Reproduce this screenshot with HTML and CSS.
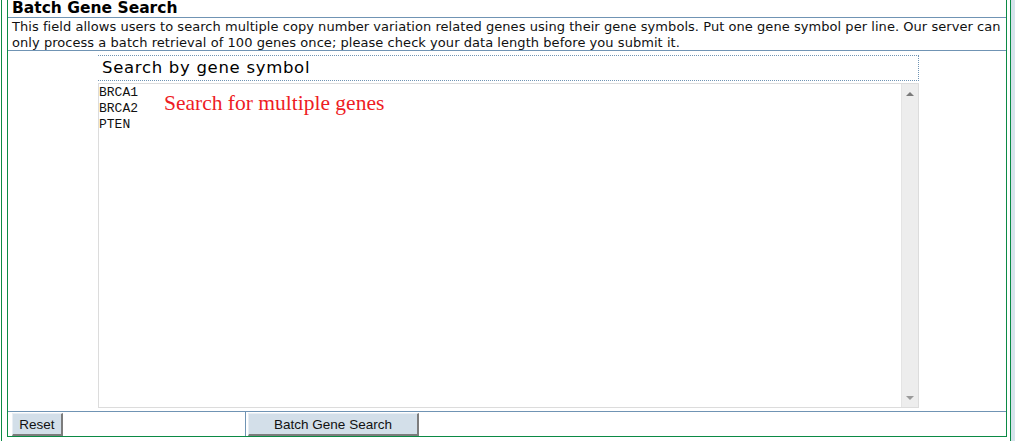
FILE: index.html
```html
<!DOCTYPE html>
<html lang="en">
<head>
  <meta charset="UTF-8">
  <title>Batch Gene Search</title>
  <link rel="stylesheet" href="styles.css">
</head>
<body>
<div class="outer">
  <div class="page">
    <div class="panel">
      <!-- 标题 -->
      <div class="row title">Batch Gene Search</div>
      <!-- 说明 -->
      <div class="row desc">This field allows users to search multiple copy number variation related genes using their gene symbols. Put one gene symbol per line. Our server can only process a batch retrieval of 100 genes once; please check your data length before you submit it.</div>
      <!-- 输入区域 -->
      <div class="row form">
        <div class="legend">Search by gene symbol</div>
        <div class="input-box">
          <textarea class="genes" spellcheck="false">BRCA1
BRCA2
PTEN</textarea>
          <span class="hint">Search for multiple genes</span>
          <div class="scrollbar">
            <span class="arr up"></span>
            <span class="arr down"></span>
          </div>
        </div>
      </div>
      <!-- 按钮 -->
      <div class="row buttons">
        <div class="cell left"><button type="reset" class="btn reset">Reset</button></div>
        <div class="cell right"><button type="submit" class="btn submit">Batch Gene Search</button></div>
      </div>
    </div>
  </div>
</div>
</body>
</html>
```

FILE: styles.css
```css
* {
  padding: 0;
  margin: 0;
  box-sizing: border-box;
}

body {
  background: #d6e2eb;
  font-family: "DejaVu Sans", Verdana, sans-serif;
  color: #111;
}

.outer {
  width: 1011px;
  background: #fff;
}

.page {
  margin-left: 1px;
  width: 1010px;
  border-left: 1px solid #0b8a45;
  border-right: 1px solid #0b8a45;
  padding: 0 3px 5px 5px;
}

.panel {
  width: 1000px;
  border: 1px solid #0b8a45;
  border-top: 0;
}

.row {
  border-bottom: 1px solid #7094b4;
}

.title {
  height: 18px;
  line-height: 16px;
  padding-left: 4px;
  font-size: 15.5px;
  font-weight: bold;
  color: #000;
}

.desc {
  height: 33px;
  padding: 1px 0 0 4px;
  font-size: 13px;
  letter-spacing: 0.05px;
  line-height: 16px;
}

.form {
  height: 361px;
  padding: 4px 0 0 90px;
}

.legend {
  width: 821px;
  height: 26px;
  border-top: 1px dotted #7094b4;
  border-right: 1px dotted #7094b4;
  border-bottom: 1px dotted #7094b4;
  padding-left: 4px;
  font-size: 16.5px;
  letter-spacing: 0.7px;
  line-height: 24px;
  color: #000;
}

.input-box {
  position: relative;
  display: flex;
  width: 821px;
  height: 325px;
  margin-top: 2px;
  border: 1px solid #dcdcdc;
}

.genes {
  flex: 1;
  border: 0;
  outline: none;
  resize: none;
  overflow: hidden;
  padding: 1px 0 0 0;
  font-family: "Liberation Mono", "Courier New", monospace;
  font-size: 13px;
  line-height: 16px;
  color: #111;
  background: #fff;
}

/* 覆盖在输入框上的提示文字 */
.hint {
  position: absolute;
  left: 65px;
  top: 7px;
  font-family: "Liberation Serif", "Times New Roman", serif;
  font-size: 21.5px;
  line-height: 24px;
  color: #ee1c24;
}

.scrollbar {
  width: 17px;
  background: #ededed;
  border-left: 1px solid #e4e4e4;
  display: flex;
  flex-direction: column;
  justify-content: space-between;
  align-items: center;
  padding: 8px 0 7px;
}

.arr {
  width: 0;
  height: 0;
  border-left: 4px solid transparent;
  border-right: 4px solid transparent;
}

.arr.up {
  border-bottom: 4px solid #7a7a7a;
}

.arr.down {
  border-top: 4px solid #9a9a9a;
}

.buttons {
  display: flex;
  height: 24px;
  border-bottom: 0;
}

.cell {
  padding: 1px 0 0 4px;
}

.cell.left {
  width: 238px;
  border-right: 1px solid #7094b4;
}

.cell.right {
  padding-left: 2px;
}

.btn {
  display: block;
  height: 23px;
  background: #d3dfe9;
  border-top: 1px solid #e8eef4;
  border-left: 1px solid #e8eef4;
  border-right: 2px solid #7c7c7c;
  border-bottom: 2px solid #7c7c7c;
  font-family: "Liberation Sans", Arial, sans-serif;
  font-size: 13.5px;
  color: #111;
}

.reset {
  width: 51px;
}

.submit {
  width: 171px;
}
```
